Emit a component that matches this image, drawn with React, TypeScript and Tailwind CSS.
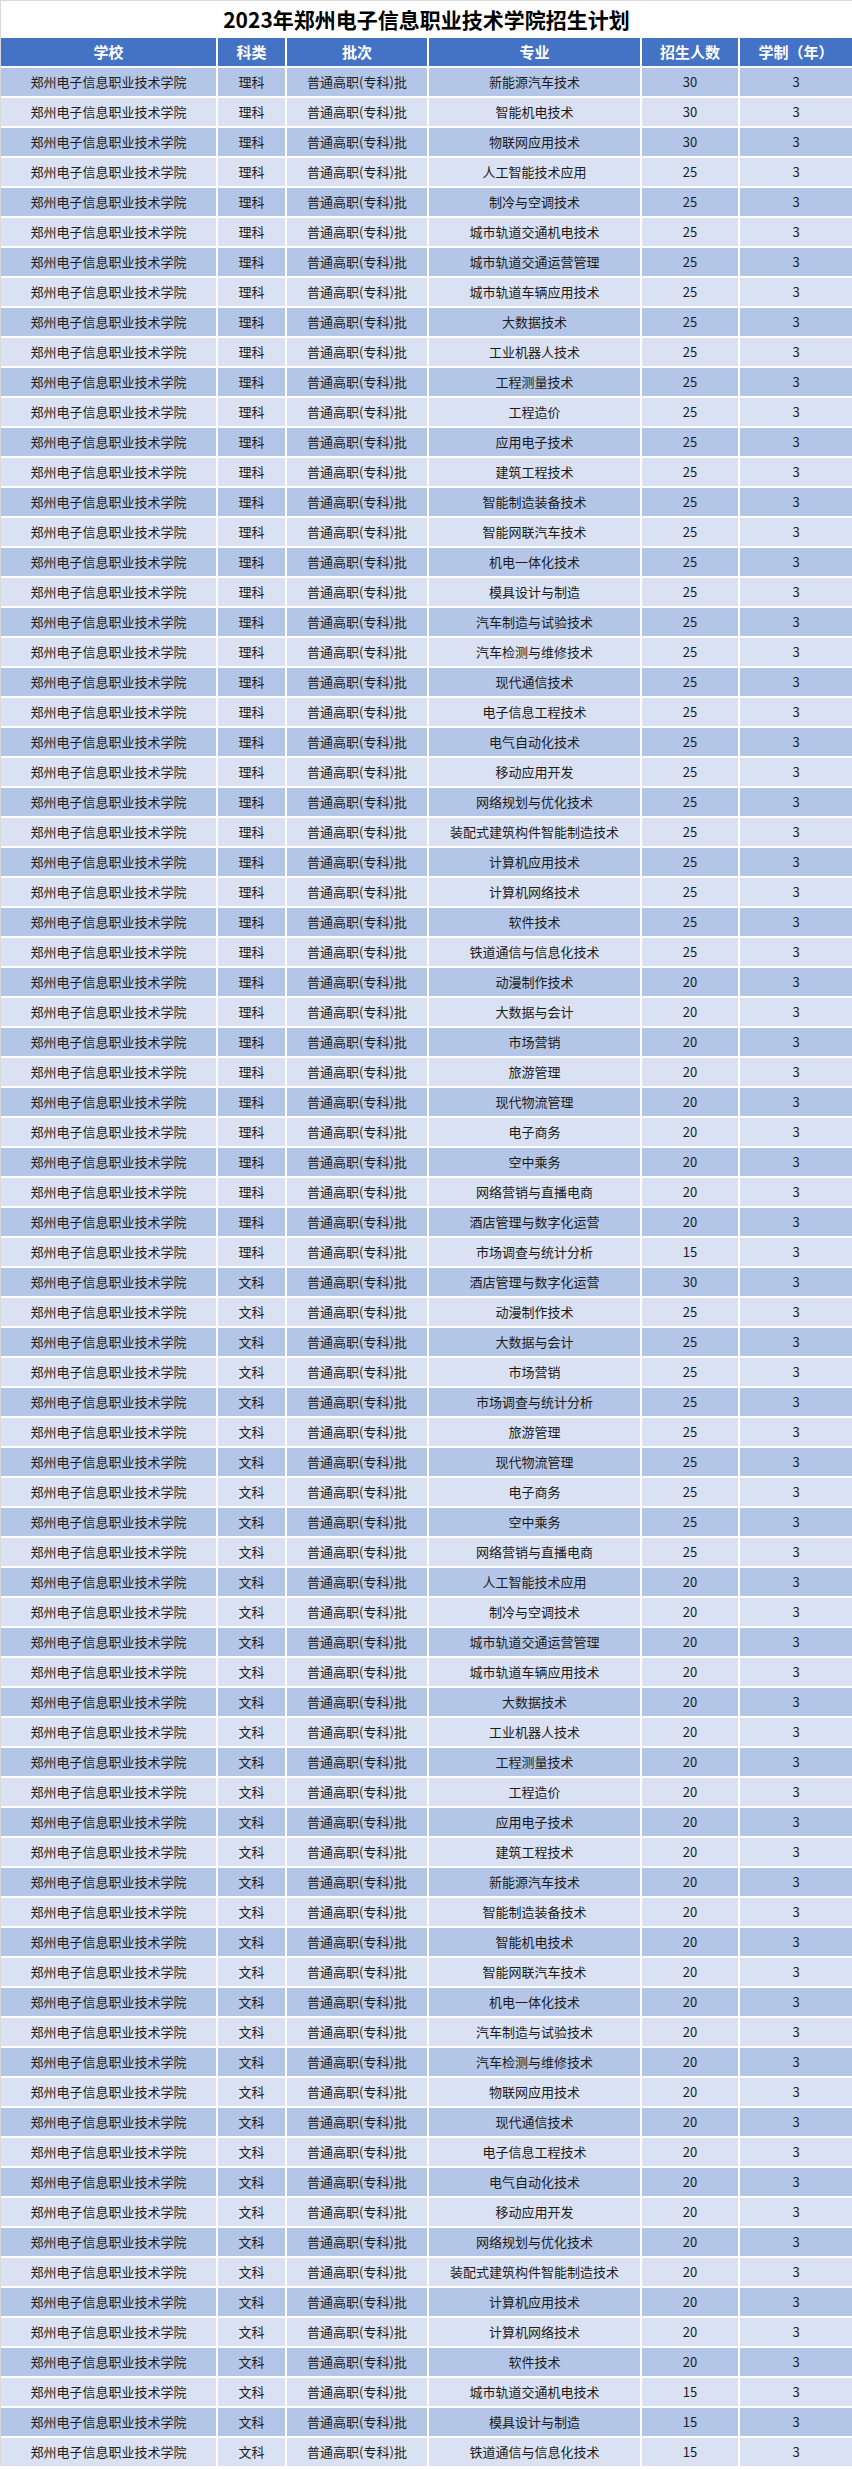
import React from "react";

// [major, count] — 理科 first, then 文科
const liKe: [string, number][] = [
  ["新能源汽车技术", 30],
  ["智能机电技术", 30],
  ["物联网应用技术", 30],
  ["人工智能技术应用", 25],
  ["制冷与空调技术", 25],
  ["城市轨道交通机电技术", 25],
  ["城市轨道交通运营管理", 25],
  ["城市轨道车辆应用技术", 25],
  ["大数据技术", 25],
  ["工业机器人技术", 25],
  ["工程测量技术", 25],
  ["工程造价", 25],
  ["应用电子技术", 25],
  ["建筑工程技术", 25],
  ["智能制造装备技术", 25],
  ["智能网联汽车技术", 25],
  ["机电一体化技术", 25],
  ["模具设计与制造", 25],
  ["汽车制造与试验技术", 25],
  ["汽车检测与维修技术", 25],
  ["现代通信技术", 25],
  ["电子信息工程技术", 25],
  ["电气自动化技术", 25],
  ["移动应用开发", 25],
  ["网络规划与优化技术", 25],
  ["装配式建筑构件智能制造技术", 25],
  ["计算机应用技术", 25],
  ["计算机网络技术", 25],
  ["软件技术", 25],
  ["铁道通信与信息化技术", 25],
  ["动漫制作技术", 20],
  ["大数据与会计", 20],
  ["市场营销", 20],
  ["旅游管理", 20],
  ["现代物流管理", 20],
  ["电子商务", 20],
  ["空中乘务", 20],
  ["网络营销与直播电商", 20],
  ["酒店管理与数字化运营", 20],
  ["市场调查与统计分析", 15],
];

const wenKe: [string, number][] = [
  ["酒店管理与数字化运营", 30],
  ["动漫制作技术", 25],
  ["大数据与会计", 25],
  ["市场营销", 25],
  ["市场调查与统计分析", 25],
  ["旅游管理", 25],
  ["现代物流管理", 25],
  ["电子商务", 25],
  ["空中乘务", 25],
  ["网络营销与直播电商", 25],
  ["人工智能技术应用", 20],
  ["制冷与空调技术", 20],
  ["城市轨道交通运营管理", 20],
  ["城市轨道车辆应用技术", 20],
  ["大数据技术", 20],
  ["工业机器人技术", 20],
  ["工程测量技术", 20],
  ["工程造价", 20],
  ["应用电子技术", 20],
  ["建筑工程技术", 20],
  ["新能源汽车技术", 20],
  ["智能制造装备技术", 20],
  ["智能机电技术", 20],
  ["智能网联汽车技术", 20],
  ["机电一体化技术", 20],
  ["汽车制造与试验技术", 20],
  ["汽车检测与维修技术", 20],
  ["物联网应用技术", 20],
  ["现代通信技术", 20],
  ["电子信息工程技术", 20],
  ["电气自动化技术", 20],
  ["移动应用开发", 20],
  ["网络规划与优化技术", 20],
  ["装配式建筑构件智能制造技术", 20],
  ["计算机应用技术", 20],
  ["计算机网络技术", 20],
  ["软件技术", 20],
  ["城市轨道交通机电技术", 15],
  ["模具设计与制造", 15],
  ["铁道通信与信息化技术", 15],
];

const rows = [
  ...liKe.map(([major, n]) => ({ type: "理科", major, n })),
  ...wenKe.map(([major, n]) => ({ type: "文科", major, n })),
];

const cols = "grid grid-cols-[215px_67px_140px_211px_96px_1fr] gap-x-[2px]";

export default function App() {
  return (
    <div
      className="w-[852px] bg-white border-t border-l border-[#d9d9d9]"
      style={{ fontFamily: '"Noto Sans CJK SC", "Microsoft YaHei", sans-serif' }}
    >
      {/* ── TITLE ───────────────────────────── */}
      <div className="h-[37px] flex items-center justify-center text-[21px] font-bold text-black">
        2023年郑州电子信息职业技术学院招生计划
      </div>

      {/* ── TABLE ───────────────────────────── */}
      <div className="flex flex-col gap-y-[2px]">
        <div className={`${cols} h-[28px] text-[15px] font-semibold text-white`}>
          {["学校", "科类", "批次", "专业", "招生人数", "学制（年）"].map((h) => (
            <div key={h} className="bg-[#4472c4] flex items-center justify-center">
              {h}
            </div>
          ))}
        </div>

        {rows.map((r, i) => (
          <div key={i} className={`${cols} h-[28px] text-[13px] text-[#1b1b1b]`}>
            {["郑州电子信息职业技术学院", r.type, "普通高职(专科)批", r.major, String(r.n), "3"].map((c, j) => (
              <div
                key={j}
                className={`${i % 2 === 0 ? "bg-[#b4c6e7]" : "bg-[#d9e1f2]"} flex items-center justify-center whitespace-nowrap`}
              >
                {c}
              </div>
            ))}
          </div>
        ))}
      </div>
    </div>
  );
}
